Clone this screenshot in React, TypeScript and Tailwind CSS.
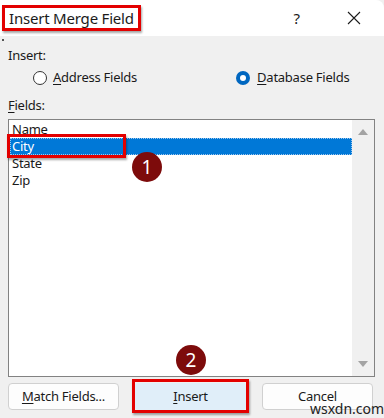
import React from "react";

function UpArrow() {
  return (
    <svg width="10" height="6" viewBox="0 0 10 6">
      <polygon points="0,6 10,6 5,0" fill="#a3a3a3" />
    </svg>
  );
}
function DownArrow() {
  return (
    <svg width="10" height="6" viewBox="0 0 10 6">
      <polygon points="0,0 10,0 5,6" fill="#a3a3a3" />
    </svg>
  );
}

function Badge({ n }: { n: string }) {
  return (
    <div className="w-[30px] h-[30px] rounded-full bg-[#7d0b0b] text-white flex items-center justify-center text-[19px] leading-none">
      {n}
    </div>
  );
}

export default function App() {
  return (
    <div
      className="relative w-[384px] h-[418px] overflow-hidden bg-[#f0f0f0] text-[#1a1a1a]"
      style={{ fontFamily: '"Noto Sans", "Open Sans", sans-serif' }}
    >
      {/* Title bar */}
      <div className="h-[36px] bg-white flex items-center pl-[2px] pr-[23px] rounded-tr-[8px]">
        <div className="border-[3px] border-[#e30000] h-[26px] px-[4px] flex items-center shadow-[1px_2px_2px_rgba(0,0,0,0.35)]">
          <span className="text-[15px] leading-none text-[#1b1b1b] tracking-[-0.2px]">Insert Merge Field</span>
        </div>
        <div className="flex-1" />
        <span className="text-[15px] leading-none mr-[47px]">?</span>
        <svg width="14" height="14" viewBox="0 0 14 14">
          <path d="M1 1 L13 13 M13 1 L1 13" stroke="#1b1b1b" strokeWidth="1.1" />
        </svg>
      </div>
      <div className="absolute left-[2px] top-[39px] w-[2px] h-[2px] bg-[#555]" />

      {/* Body */}
      <div className="pl-[8px] pr-[9px] text-[13px] leading-none tracking-[-0.25px]">
        <div className="pt-[13px] h-[31px]">Insert:</div>
        <div className="flex items-center h-[17px] mt-[2px]">
          <div className="ml-[25px] w-[14px] h-[14px] rounded-full border border-[#333] bg-white" />
          <span className="ml-[6px]">
            <span className="underline underline-offset-2">A</span>ddress Fields
          </span>
          <div className="ml-[99px] w-[14px] h-[14px] rounded-full bg-[#0067c0] flex items-center justify-center">
            <div className="w-[6px] h-[6px] rounded-full bg-white" />
          </div>
          <span className="ml-[7px]">
            <span className="underline underline-offset-2">D</span>atabase Fields
          </span>
        </div>
        <div className="mt-[13px] h-[20px]">
          <span className="underline underline-offset-2">F</span>ields:
        </div>

        {/* Listbox */}
        <div className="h-[258px] border border-[#828282] bg-white flex">
          <div className="flex-1 pt-[1px] pl-[1px]">
            <div className="h-[17px] flex items-center pl-[2px]">Name</div>
            <div className="h-[17px] flex items-center pl-[2px] bg-[#0078d7] text-white outline outline-1 outline-dotted outline-[#9cc6ee] -outline-offset-1">
              City
            </div>
            <div className="h-[17px] flex items-center pl-[2px]">State</div>
            <div className="h-[17px] flex items-center pl-[2px]">Zip</div>
          </div>
          <div className="w-[22px] bg-[#f0f0f0] flex flex-col items-center justify-between py-[9px]">
            <UpArrow />
            <DownArrow />
          </div>
        </div>

        {/* Buttons */}
        <div className="mt-[6px] grid grid-cols-3 gap-[16px] w-[365px]">
          <div className="h-[27px] rounded-[4px] border border-[#d0d0d0] bg-[#fdfdfd] flex items-center justify-center">
            <span>
              <span className="underline underline-offset-2">M</span>atch Fields...
            </span>
          </div>
          <div className="h-[27px] rounded-[3px] bg-[#e0eef9] flex items-center justify-center relative">
            <span>
              <span className="underline underline-offset-2">I</span>nsert
            </span>
            <div className="absolute -left-[3px] -right-[3px] -top-[4px] -bottom-[3px] border-[3px] border-[#e30000] shadow-[1px_2px_2px_rgba(0,0,0,0.35)]" />
          </div>
          <div className="h-[27px] rounded-[4px] border border-[#d0d0d0] bg-[#fdfdfd] flex items-center justify-center">
            Cancel
          </div>
        </div>
      </div>

      {/* Annotations */}
      <div className="absolute left-[7px] top-[134px] w-[119px] h-[24px] border-[3px] border-[#e30000] shadow-[1px_2px_2px_rgba(0,0,0,0.35)]" />
      <div className="absolute left-[132px] top-[152px]">
        <Badge n="1" />
      </div>
      <div className="absolute left-[176px] top-[345px]">
        <Badge n="2" />
      </div>
      <div className="absolute left-[310px] top-[402px] text-[14px] leading-none text-[#222]">
        wsxdn.com
      </div>
    </div>
  );
}
